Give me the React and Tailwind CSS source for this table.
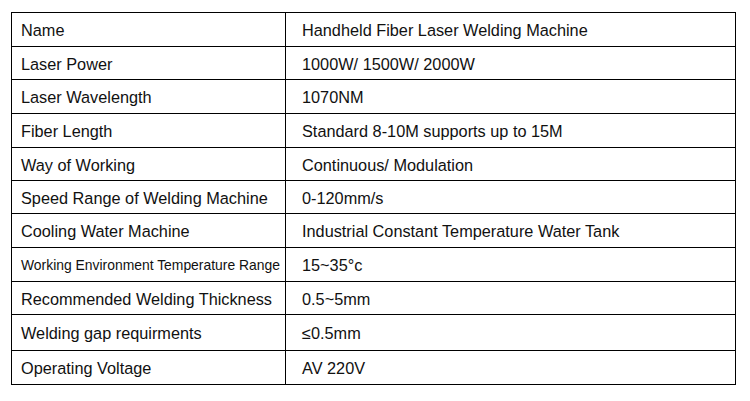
import React from "react";

const rows = [
  { k: "Name", v: "Handheld Fiber Laser Welding Machine", h: "h-[34px]" },
  { k: "Laser Power", v: "1000W/ 1500W/ 2000W", h: "h-[33px]" },
  { k: "Laser Wavelength", v: "1070NM", h: "h-[34px]" },
  { k: "Fiber Length", v: "Standard 8-10M supports up to 15M", h: "h-[34px]" },
  { k: "Way of Working", v: "Continuous/ Modulation", h: "h-[33px]" },
  { k: "Speed Range of Welding Machine", v: "0-120mm/s", h: "h-[33px]" },
  { k: "Cooling Water Machine", v: "Industrial Constant Temperature Water Tank", h: "h-[34px]" },
  { k: "Working Environment Temperature Range", v: "15~35°c", h: "h-[34px]", small: true },
  { k: "Recommended Welding Thickness", v: "0.5~5mm", h: "h-[33px]" },
  { k: "Welding gap requirments", v: "≤0.5mm", h: "h-[36px]" },
  { k: "Operating Voltage", v: "AV 220V", h: "h-[34px]" },
];

export default function App() {
  return (
    <div className="w-[750px] h-[401px] bg-white pt-[12px] pl-[11px] text-[#111] font-['Liberation_Sans',Arial,sans-serif]">
      <div className="w-[725px] border-l border-t border-r border-black">
        {rows.map((r, i) => (
          <div key={i} className={`flex ${r.h} border-b border-black`}>
            <div
              className={`w-[274px] shrink-0 border-r border-black flex items-center pl-[9px] pt-[2px] whitespace-nowrap ${
                r.small ? "text-[13.9px]" : "text-[16.3px]"
              }`}
            >
              {r.k}
            </div>
            <div className="flex-1 flex items-center pl-[16px] pt-[2px] text-[16.3px] whitespace-nowrap">
              {r.v}
            </div>
          </div>
        ))}
      </div>
    </div>
  );
}
